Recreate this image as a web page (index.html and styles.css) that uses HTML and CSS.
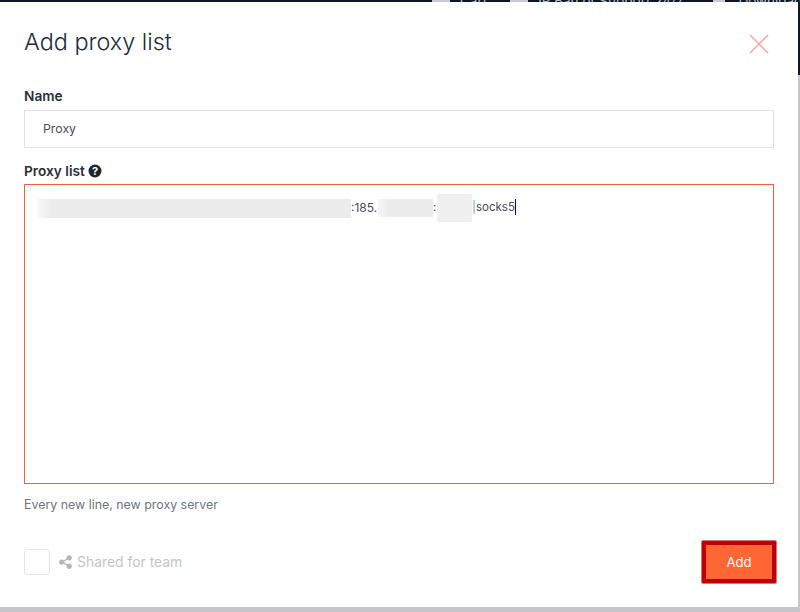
FILE: index.html
```html
<!DOCTYPE html>
<html lang="en">
<head>
    <meta charset="UTF-8">
    <title>Add proxy list</title>
    <link rel="stylesheet" href="styles.css">
</head>
<body>

<div class="topbar">
    <span class="top-icon top-icon-a"></span>
    <span class="top-item">Cart</span>
    <span class="top-icon top-icon-b"></span>
    <span class="top-item">IP Ban or Support 24/7</span>
    <span class="top-icon top-icon-c"></span>
    <span class="top-item">Download</span>
</div>

<div class="page-row">
    <div class="modal">
        <div class="modal-head">
            <h2>Add proxy list</h2>
            <svg class="close-icon" width="20" height="20" viewBox="0 0 20 20">
                <path d="M1 1L19 19M19 1L1 19" stroke="#ffa49c" stroke-width="1.5" fill="none"/>
            </svg>
        </div>

        <label class="field-label">Name</label>
        <div class="name-input">Proxy</div>

        <label class="field-label list-label">Proxy list
            <svg class="help-icon" width="14" height="14" viewBox="0 0 14 14">
                <circle cx="7" cy="7" r="6.5" fill="#212529"/>
                <text x="7" y="10.6" class="help-mark">?</text>
            </svg>
        </label>
        <div class="list-input">
            <div class="list-line">
                <span class="blur blur-a"></span><span class="list-text ip-start">:185.</span><span class="blur blur-b"></span><span class="list-text colon">:</span><span class="blur blur-c"></span><span class="list-text pipe">|</span><span class="list-text socks">socks5</span><span class="caret"></span>
            </div>
        </div>

        <p class="hint">Every new line, new proxy server</p>

        <div class="modal-foot">
            <div class="share">
                <span class="checkbox"></span>
                <svg class="share-icon" width="13" height="14" viewBox="0 0 13 14">
                    <path d="M3 7L10 3M3 7L10 11" stroke="#b5b5b5" stroke-width="1.4"/>
                    <circle cx="2.7" cy="7" r="2.6" fill="#b5b5b5"/>
                    <circle cx="10.2" cy="2.8" r="2.6" fill="#b5b5b5"/>
                    <circle cx="10.2" cy="11.2" r="2.6" fill="#b5b5b5"/>
                </svg>
                <span class="share-text">Shared for team</span>
            </div>
            <button type="button" class="add-btn">Add</button>
        </div>
    </div>

    <div class="side-strip"></div>
</div>

</body>
</html>
```

FILE: styles.css
```css
html, body {
    margin: 0;
    height: 100%;
}

body {
    width: 800px;
    height: 612px;
    overflow: hidden;
    background: #c6c6ca;
    font-family: Inter, "Open Sans", sans-serif;
    color: #212529;
}

.topbar {
    height: 2px;
    padding-left: 432px;
    background: #0f1726;
    overflow: hidden;
    display: flex;
    font-size: 13.5px;
    line-height: 2px;
    color: #b9c2d0;
    white-space: nowrap;
}

.top-icon {
    height: 2px;
    flex: none;
    background: #c9cbd0;
}

.top-icon-a {
    width: 18px;
    margin-right: 10px;
}

.top-icon-b {
    width: 18px;
    margin: 0 10px 0 23px;
}

.top-icon-c {
    width: 12px;
    margin: 0 13px 0 30px;
}

.page-row {
    display: flex;
    align-items: flex-start;
}

.modal {
    width: 798px;
    height: 605px;
    box-sizing: border-box;
    padding: 0 24px;
    background: #fff;
    flex: none;
}

.side-strip {
    width: 2px;
    height: 73px;
    background: #0f1726;
}

.modal-head {
    height: 86px;
    display: flex;
    justify-content: space-between;
    align-items: flex-start;
}

.modal-head h2 {
    margin: 25px 0 0;
    font-size: 23.4px;
    line-height: 30px;
    font-weight: 300;
    color: #212c3a;
}

.close-icon {
    margin: 32px 5px 0 0;
}

.field-label {
    display: block;
    font-size: 13.7px;
    line-height: 16px;
    font-weight: 600;
    margin-bottom: 6px;
    color: #2b2f36;
}

.name-input {
    height: 38px;
    box-sizing: border-box;
    border: 1px solid #e2e2e2;
    padding-left: 18px;
    font-size: 12.3px;
    line-height: 36px;
    color: #4d4d4d;
}

.list-label {
    margin: 15px 0 5px;
    display: flex;
    align-items: center;
    gap: 3px;
}

.help-mark {
    font-size: 11px;
    font-weight: 700;
    fill: #fff;
    text-anchor: middle;
}

.list-input {
    height: 300px;
    box-sizing: border-box;
    border: 1px solid #f0623a;
    padding: 13px 12px;
}

.list-line {
    display: flex;
    align-items: center;
    height: 20px;
    font-size: 11.5px;
    color: #444c58;
}

.list-text {
    flex: none;
    padding-bottom: 2px;
}

.ip-start {
    width: 27px;
    font-size: 12px;
}

.colon {
    width: 4px;
}

.blur {
    display: block;
    flex: none;
    background: #ececec;
}

.blur-a {
    width: 314px;
    height: 19px;
    background: linear-gradient(90deg, #f8f8f8, #ececec 14px);
}

.blur-b {
    width: 55px;
    height: 18px;
    background: linear-gradient(90deg, #f6f6f6, #ececec 10px);
}

.blur-c {
    width: 35px;
    height: 28px;
    background: #f0f0f0;
}

.pipe {
    width: 4px;
    color: #5f9bd8;
}

.caret {
    width: 1px;
    height: 16px;
    margin-bottom: 2px;
    background: #111;
}

.hint {
    margin: 13px 0 0;
    font-size: 12.4px;
    line-height: 16px;
    color: #6c757d;
}

.modal-foot {
    margin-top: 28px;
    display: flex;
    justify-content: space-between;
    align-items: center;
}

.share {
    display: flex;
    align-items: center;
}

.checkbox {
    width: 24px;
    height: 24px;
    border: 1px solid #e4e4e4;
    border-radius: 3px;
    margin-right: 9px;
}

.share-icon {
    margin-right: 5px;
}

.share-text {
    font-size: 13.9px;
    color: #c4c4c4;
}

.add-btn {
    width: 74px;
    height: 42px;
    box-sizing: border-box;
    margin-right: -2px;
    background: #ff6633;
    color: #fff;
    border: 4px solid #c00000;
    border-radius: 1px;
    box-shadow: 0 0 0 1px #e0707c;
    font-family: inherit;
    font-size: 13.2px;
    padding: 0;
}
```
